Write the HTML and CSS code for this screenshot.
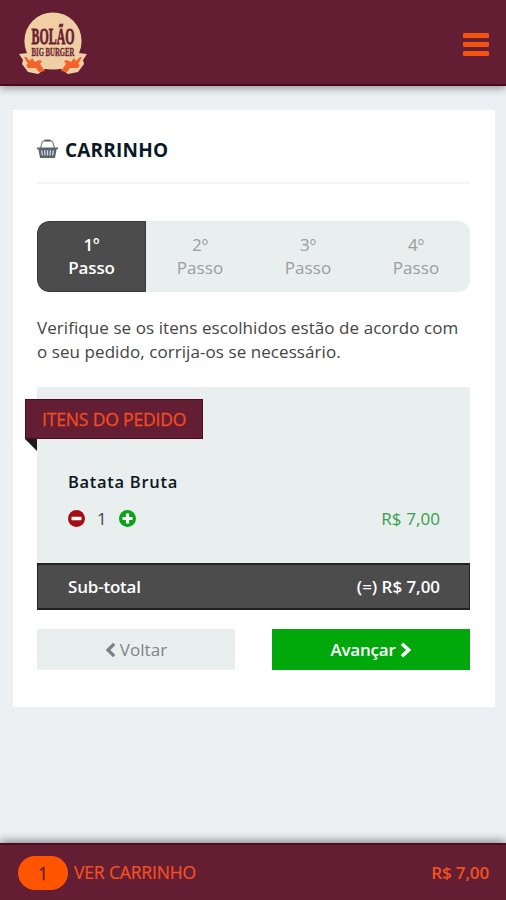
FILE: index.html
```html
<!DOCTYPE html>
<html lang="pt-BR">
<head>
<meta charset="utf-8">
<title>Carrinho</title>
<link rel="stylesheet" href="styles.css">
</head>
<body>
<header class="topbar">
  <svg class="logo" width="70" height="66" viewBox="0 0 70 66" aria-label="Bolão Big Burger">
    <circle cx="35" cy="30" r="28.6" fill="#f0cfa4"/>
    <path d="M1 43 L10 42 L20 50 L50 50 L60 42 L69 43 L65 49 L66 53 L60 61 L50 63 L43 58 H27 L20 63 L10 61 L4 53 L5 49 Z" fill="#f0cfa4"/>
    <path d="M6 46 L8 46 L12 50 L14 47 L17 51 L21 49 L24 50 L22 53 L27 60 L21 61 L18 57 L10 57 L8 54 L10 53 Z M64 46 L62 46 L58 50 L56 47 L53 51 L49 49 L46 50 L48 53 L43 60 L49 61 L52 57 L60 57 L62 54 L60 53 Z" fill="#f4622a"/>
    <text class="logo-name" x="13.5" y="33" textLength="43" lengthAdjust="spacingAndGlyphs">BOLÃO</text>
    <text class="logo-sub" x="13.5" y="44.5" textLength="43" lengthAdjust="spacingAndGlyphs">BIG BURGER</text>
  </svg>
  <div class="menu"><span></span><span></span><span></span></div>
</header>
<main class="card">
  <h1 class="title">
    <svg width="21" height="20" viewBox="0 0 21 20">
      <path d="M3.6 9 L5 3.6 Q5.6 1.8 8 1.6 H13 Q15.4 1.8 16 3.6 L17.4 9" fill="none" stroke="#7d858c" stroke-width="1.2"/>
      <path d="M7.5 1.5H13.5" stroke="#4c555e" stroke-width="1.8"/>
      <path d="M0 8.4H21V10.2H19.6L18 19H3L1.4 10.2H0Z" fill="#5a6470"/>
      <path d="M4.6 11.3L5.4 16.5M7.6 11.3L8 16.5M10.5 11.3V16.5M13.4 11.3L13 16.5M16.4 11.3L15.6 16.5" stroke="#d3dae0" stroke-width="1.3"/>
    </svg>
    <span>CARRINHO</span>
  </h1>
  <ol class="steps">
    <li class="step active">1º<br>Passo</li>
    <li class="step">2º<br>Passo</li>
    <li class="step">3º<br>Passo</li>
    <li class="step">4º<br>Passo</li>
  </ol>
  <p class="intro">Verifique se os itens escolhidos estão de acordo com<br>o seu pedido, corrija-os se necessário.</p>
  <section class="order">
    <h2 class="ribbon"><span>ITENS DO PEDIDO</span></h2>
    <div class="item">
      <h3 class="item-name">Batata Bruta</h3>
      <div class="item-row">
        <svg width="17" height="17" viewBox="0 0 17 17"><circle cx="8.5" cy="8.5" r="8.5" fill="#a50d12"/><rect x="3.5" y="6.8" width="10" height="3.4" rx=".6" fill="#fff"/></svg>
        <span class="qty">1</span>
        <svg width="17" height="17" viewBox="0 0 17 17"><circle cx="8.5" cy="8.5" r="8.5" fill="#09a31a"/><path d="M8.5 3.5V13.5M3.5 8.5H13.5" stroke="#fff" stroke-width="3.2"/></svg>
        <span class="price">R$ 7,00</span>
      </div>
    </div>
    <div class="subtotal"><span class="sub-label">Sub-total</span><span class="sub-value">(=) R$ 7,00</span></div>
  </section>
  <div class="actions">
    <a class="btn back"><svg width="11" height="16" viewBox="0 0 11 16"><path d="M9.2 1.8L3 8L9.2 14.2" fill="none" stroke="#7b8184" stroke-width="3.3"/></svg><span>Voltar</span></a>
    <a class="btn next"><span>Avançar</span><svg width="12" height="16" viewBox="0 0 12 16"><path d="M2 1.8L8.6 8L2 14.2" fill="none" stroke="#fff" stroke-width="3.6"/></svg></a>
  </div>
</main>
<footer class="cartbar">
  <span class="count">1</span><span class="see">VER CARRINHO</span><span class="total">R$ 7,00</span>
</footer>
</body>
</html>
```
FILE: styles.css
```css
* { box-sizing: border-box; }
body {
  margin: 0;
  height: 900px;
  display: flex;
  flex-direction: column;
  overflow: hidden;
  background: #ecf0f3;
  font: 17px/23.5px "Open Sans", sans-serif;
  letter-spacing: .07px;
  color: #444;
}
h1, h2, h3, p, ol { margin: 0; padding: 0; }
svg { display: block; flex: none; }
.topbar {
  flex: none;
  height: 86px;
  padding: 11px 17px 0 18px;
  display: flex;
  justify-content: space-between;
  background: #641e34;
  border-bottom: 2px solid #4f071d;
  box-shadow: 0 2px 8px rgba(0, 0, 0, .4);
}
.logo { overflow: visible; letter-spacing: 0; }
.logo-name { font: bold 23px "Liberation Serif", serif; fill: #6b2034; stroke: #6b2034; stroke-width: .8px; }
.logo-sub { font: bold 11.5px "Liberation Serif", serif; fill: #6b2034; stroke: #6b2034; stroke-width: .3px; }
.menu { width: 26px; margin-top: 22px; display: flex; flex-direction: column; gap: 4px; }
.menu span { height: 5px; border-radius: 1px; background: #f4530f; }
.card {
  flex: none;
  width: 482px;
  height: 597px;
  margin: 24px 0 0 13px;
  padding: 24px 25px 0 24px;
  background: #fff;
}
.title {
  height: 50px;
  padding-top: 4px;
  display: flex;
  gap: 7px;
  border-bottom: 2px solid #f3f5f5;
  font-size: 19px;
  line-height: 24px;
  font-weight: 700;
  letter-spacing: .2px;
  color: #0c1826;
}
.title svg { margin-top: 1px; }
.steps {
  height: 71px;
  margin-top: 36.5px;
  display: grid;
  grid-template-columns: 109px repeat(3, 108px);
  list-style: none;
  border-radius: 12px;
  overflow: hidden;
  background: #e9eeee;
}
.step { padding-top: 12px; text-align: center; color: #999e9f; }
.step.active { background: #4c4c4c; border: 1px solid #373737; border-radius: 12px 0 0 12px; padding-top: 11px; color: #fff; font-weight: 600; letter-spacing: -.1px; }
.intro { margin-top: 24.5px; height: 71px; white-space: nowrap; color: #444; }
.order { height: 223px; display: flex; flex-direction: column; background: #e9eeee; }
.ribbon {
  position: relative;
  width: 178px;
  height: 40px;
  margin: 12px 0 0 -12px;
  padding-left: 16px;
  background: #641e34;
  border: 1px solid #500a20;
  font-size: 17.5px;
  line-height: 38px;
  font-weight: 400;
  letter-spacing: -.15px;
  -webkit-text-stroke: .3px #f34b20;
  color: #f34b20;
  white-space: nowrap;
}
.ribbon::after {
  content: "";
  position: absolute;
  left: -1px;
  top: 39px;
  border-top: 12px solid #1b1b1b;
  border-left: 12px solid transparent;
}
.item { flex: 1; padding: 31px 30px 0 31px; }
.item-name { font-size: 16.5px; font-weight: 600; color: #0c1622; letter-spacing: .7px; }
.item-row { display: flex; align-items: center; margin-top: 13px; }
.qty { width: 34px; text-align: center; }
.price { margin-left: auto; color: #36a04b; }
.subtotal {
  height: 47px;
  padding: 0 29px 0 30px;
  display: flex;
  justify-content: space-between;
  align-items: center;
  background: #4c4c4c;
  border: 2px solid #232323;
  border-width: 2px 1px;
  font-weight: 600;
  letter-spacing: -.2px;
  color: #fff;
}
.sub-value { letter-spacing: -.05px; }
.actions { margin-top: 19px; display: grid; grid-template-columns: 198px 198px; justify-content: space-between; }
.btn { height: 41px; display: flex; justify-content: center; align-items: center; gap: 4px; }
.back { background: #e9eeee; color: #7f8588; }
.next { background: #00a80b; color: #fff; font-weight: 600; letter-spacing: -.2px; }
.cartbar {
  flex: none;
  height: 57px;
  margin-top: auto;
  padding: 0 17px 0 18px;
  display: flex;
  align-items: center;
  background: #641e34;
  border-top: 2px solid #500a20;
  box-shadow: 0 -2px 9px rgba(0, 0, 0, .45);
  color: #f4511e;
  font-size: 17.5px;
  letter-spacing: -.15px;
}
.count { width: 50px; height: 34px; border-radius: 17px; background: #ff5500; color: #641e34; text-align: center; line-height: 34px; -webkit-text-stroke: .3px #641e34; }
.see { margin-left: 6px; -webkit-text-stroke: .2px #f4511e; }
.total { margin-left: auto; font-size: 17px; font-weight: 600; }
```
